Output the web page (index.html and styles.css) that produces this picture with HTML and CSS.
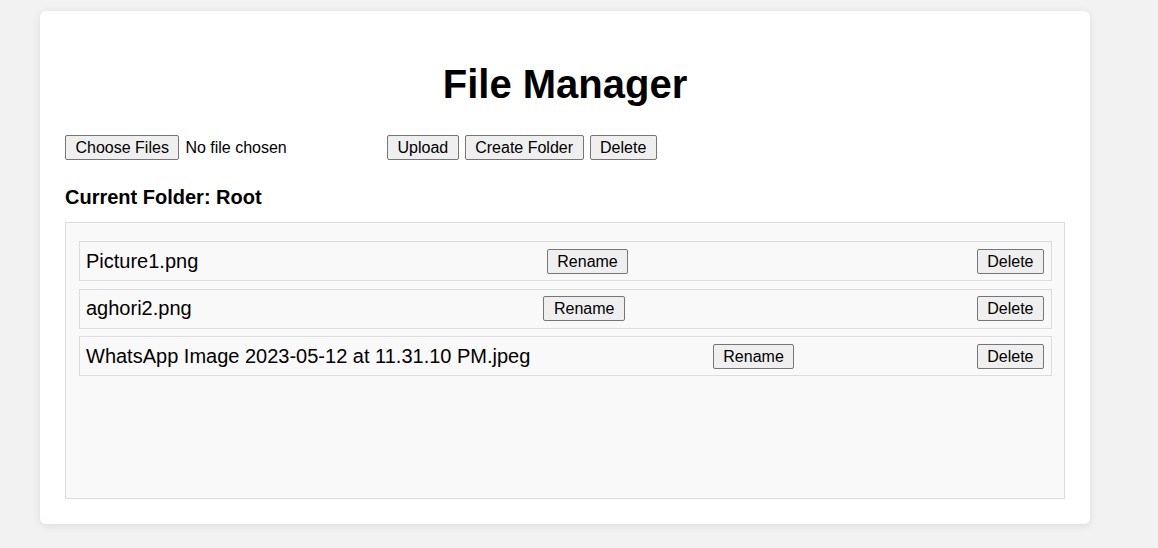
FILE: index.html
```html
<!DOCTYPE html>
<html lang="en">
<head>
<meta charset="utf-8">
<title>File Manager</title>
<link rel="stylesheet" href="styles.css">
</head>
<body>
<div class="card">
  <h1 class="title">File Manager</h1>
  <div class="toolbar">
    <div class="file-input">
      <button class="btn" type="button">Choose Files</button>
      <span class="file-status">No file chosen</span>
    </div>
    <button class="btn" type="button">Upload</button>
    <button class="btn" type="button">Create Folder</button>
    <button class="btn" type="button">Delete</button>
  </div>
  <h2 class="current">Current Folder: Root</h2>
  <div class="file-list">
    <div class="file-item">
      <span class="file-name">Picture1.png</span>
      <button class="btn" type="button">Rename</button>
      <button class="btn" type="button">Delete</button>
    </div>
    <div class="file-item">
      <span class="file-name">aghori2.png</span>
      <button class="btn" type="button">Rename</button>
      <button class="btn" type="button">Delete</button>
    </div>
    <div class="file-item">
      <span class="file-name">WhatsApp Image 2023-05-12 at 11.31.10 PM.jpeg</span>
      <button class="btn" type="button">Rename</button>
      <button class="btn" type="button">Delete</button>
    </div>
  </div>
</div>
</body>
</html>
```
FILE: styles.css
```css
* {
  box-sizing: border-box;
}

html, body {
  margin: 0;
  background: #f2f2f2;
  font-family: "Liberation Sans", Arial, sans-serif;
  color: #000;
}

body {
  padding: 11px 40px 25px 40px;
}

.card {
  width: 1050px;
  background: #fff;
  border-radius: 6px;
  box-shadow: 0 2px 8px rgba(0, 0, 0, 0.09);
  padding: 25px;
}

.title {
  margin: 25px 0 0 0;
  font-size: 40px;
  line-height: 46px;
  font-weight: bold;
  text-align: center;
}

.toolbar {
  display: flex;
  align-items: center;
  gap: 6px;
  margin-top: 28px;
}

.file-input {
  display: flex;
  align-items: center;
  width: 316px;
}

.file-status {
  font-size: 16px;
  margin-left: 6px;
}

.btn {
  font-family: "Liberation Sans", Arial, sans-serif;
  font-size: 16px;
  line-height: 19px;
  height: 25px;
  padding: 2px 9.5px;
  color: #000;
  background: #efefef;
  border: 1px solid #767676;
  border-radius: 2px;
  white-space: nowrap;
}

.current {
  margin: 26px 0 0 0;
  font-size: 20px;
  line-height: 23px;
  font-weight: bold;
}

.file-list {
  margin-top: 13px;
  height: 277px;
  background: #f9f9f9;
  border: 1px solid #ddd;
  padding: 18px 12px 0 13px;
  display: flex;
  flex-direction: column;
  gap: 7.5px;
}

.file-item {
  display: flex;
  align-items: center;
  justify-content: space-between;
  height: 40px;
  padding: 0 7px 0 6px;
  border: 1px solid #ddd;
  background: #f9f9f9;
}

.file-name {
  font-size: 20px;
  line-height: 23px;
}
```
